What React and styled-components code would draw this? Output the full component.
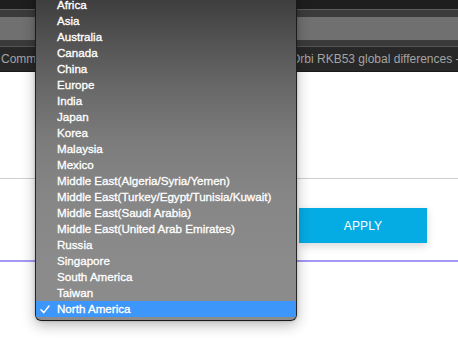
import React from "react";
import styled, { createGlobalStyle } from "styled-components";

const GlobalStyle = createGlobalStyle`
  html, body { margin: 0; padding: 0; background: #ffffff; overflow: hidden; }
  * { box-sizing: border-box; }
`;

const Page = styled.div`
  position: relative;
  width: 458px;
  height: 338px;
  overflow: hidden;
  background: #ffffff;
  font-family: "Liberation Sans", Arial, sans-serif;
`;

const Chrome = styled.div`
  display: flex;
  flex-direction: column;
`;

const Strip = styled.div`
  height: ${(p) => p.$h}px;
  background: ${(p) => p.$bg};
  border-bottom: ${(p) => (p.$line ? `1px solid ${p.$line}` : "none")};
`;

const TabBar = styled.div`
  display: flex;
  height: 25px;
  background: #282828;
  border-bottom: 1px solid #1a1a1a;
`;

const Tab = styled.div`
  flex: 0 0 ${(p) => p.$w}px;
  padding-left: ${(p) => p.$pad}px;
  white-space: nowrap;
  overflow: hidden;
  font-size: 12px;
  line-height: 24px;
  color: #a4a4a4;
`;

const Content = styled.div`
  display: flex;
  flex-direction: column;
`;

const Rule = styled.div`
  margin-top: ${(p) => p.$mt}px;
  height: ${(p) => p.$h}px;
  background: ${(p) => p.$color};
`;

const ButtonRow = styled.div`
  display: flex;
  padding-left: 299px;
  margin-top: 29px;
`;

const ApplyButton = styled.button`
  width: 128px;
  height: 35px;
  border: none;
  border-radius: 0;
  background: #04ace3;
  color: #ffffff;
  font-family: "Liberation Sans", Arial, sans-serif;
  font-size: 12px;
  letter-spacing: 0.1px;
  box-shadow: 0 3px 8px rgba(0, 0, 0, 0.16);
`;

const Menu = styled.div`
  position: absolute;
  left: 35px;
  top: -7px;
  width: 262px;
  padding: 3px 0;
  border: 1px solid rgba(20, 20, 20, 0.85);
  border-radius: 6px;
  background: linear-gradient(
    180deg,
    #3b3b3b 0%,
    #4f4f4f 12%,
    #676767 28%,
    #7c7c7c 45%,
    #868686 62%,
    #8a8a8a 80%,
    #8c8c8c 100%
  );
  box-shadow: 0 4px 14px rgba(0, 0, 0, 0.28), 0 0 3px rgba(0, 0, 0, 0.2);
  overflow: hidden;
`;

const Item = styled.div`
  position: relative;
  height: 16px;
  line-height: 16px;
  padding-left: 21px;
  font-size: 11.6px;
  color: #ffffff;
  -webkit-text-stroke: 0.35px #ffffff;
  text-shadow: 0 0 1px rgba(0, 0, 0, 0.15);
  white-space: nowrap;
  background: ${(p) => (p.$selected ? "#3d96fa" : "transparent")};
`;

const Check = styled.svg`
  position: absolute;
  left: 4px;
  top: 4px;
  width: 10px;
  height: 9px;
`;

const regions = [
  "Africa",
  "Asia",
  "Australia",
  "Canada",
  "China",
  "Europe",
  "India",
  "Japan",
  "Korea",
  "Malaysia",
  "Mexico",
  "Middle East(Algeria/Syria/Yemen)",
  "Middle East(Turkey/Egypt/Tunisia/Kuwait)",
  "Middle East(Saudi Arabia)",
  "Middle East(United Arab Emirates)",
  "Russia",
  "Singapore",
  "South America",
  "Taiwan",
  "North America",
];

export default function App() {
  return (
    <>
      <GlobalStyle />
      <Page>
        <Chrome>
          <Strip $h={10} $bg="#1e1e1e" $line="#5e5e5e" />
          <Strip $h={7} $bg="#3b3b3b" />
          <Strip $h={23} $bg="#707070" />
          <Strip $h={7} $bg="#3a3a3a" $line="#555555" />
          <TabBar>
            <Tab $w={220} $pad={1}>Community</Tab>
            <Tab $w={238} $pad={71}>Orbi RKB53 global differences - NETGEAR</Tab>
          </TabBar>
        </Chrome>
        <Content>
          <Rule $mt={106} $h={1} $color="#cfcfcf" />
          <ButtonRow>
            <ApplyButton>APPLY</ApplyButton>
          </ButtonRow>
          <Rule $mt={17} $h={2} $color="#a398f4" />
        </Content>
        <Menu>
          {regions.map((r) => (
            <Item key={r} $selected={r === "North America"}>
              {r === "North America" && (
                <Check viewBox="0 0 10 9">
                  <path
                    d="M1 4.8 L3.8 7.6 L9 1"
                    fill="none"
                    stroke="#ffffff"
                    strokeWidth="1.5"
                    strokeLinecap="round"
                    strokeLinejoin="round"
                  />
                </Check>
              )}
              {r}
            </Item>
          ))}
        </Menu>
      </Page>
    </>
  );
}
